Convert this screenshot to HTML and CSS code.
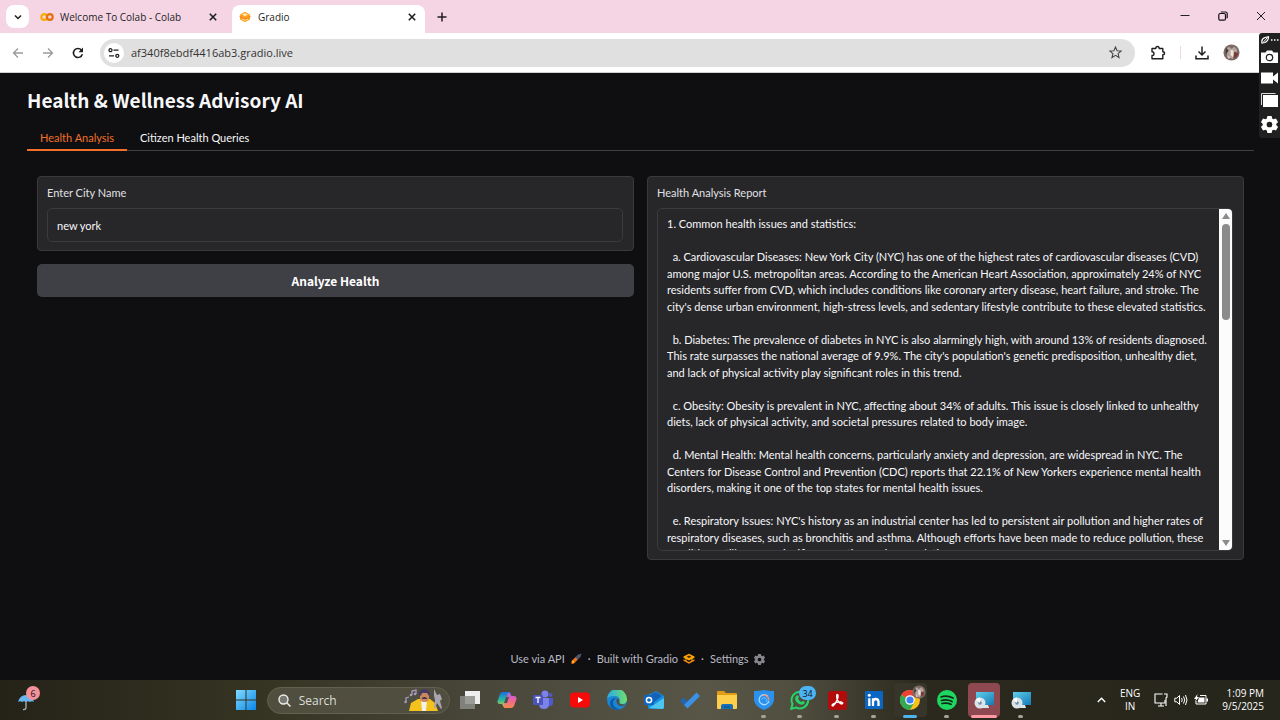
FILE: index.html
```
<!DOCTYPE html>
<html lang="en">
<head>
<meta charset="utf-8">
<meta name="viewport" content="width=device-width, initial-scale=1">
<title>Gradio</title>
<link rel="stylesheet" href="styles.css">
</head>
<body>
<svg class="defs" aria-hidden="true">
  <defs>
    <linearGradient id="blue" x1="0" y1="0" x2="1" y2="1"><stop offset="0" stop-color="#7fdcff"/><stop offset="1" stop-color="#0a86e8"/></linearGradient>
    <linearGradient id="screen" x1="0" y1="0" x2="1" y2="1"><stop offset="0" stop-color="#5fd0ea"/><stop offset="1" stop-color="#1579b8"/></linearGradient>
    <linearGradient id="edge" x1="0" y1="0" x2="1" y2="0"><stop offset="0" stop-color="#2aa9e8"/><stop offset="1" stop-color="#6fe06a"/></linearGradient>
    <linearGradient id="copA" x1="0" y1="0" x2="0" y2="1"><stop offset="0" stop-color="#1a6fe0"/><stop offset=".5" stop-color="#25b8a0"/><stop offset="1" stop-color="#f2c32e"/></linearGradient>
    <linearGradient id="copB" x1="0" y1="0" x2="0" y2="1"><stop offset="0" stop-color="#a960ee"/><stop offset=".5" stop-color="#f0649a"/><stop offset="1" stop-color="#f58a4b"/></linearGradient>
    <symbol id="gradio" viewBox="0 0 12 12">
      <path d="M6 .8 11 3.500v5L6 11.200 1 8.500v-5z" fill="#ffa51f"/>
      <path d="M3.200 3.600 6 2.200l2.800 1.400L6 5.200z" fill="#fff0c8"/>
      <path d="M.5 5.400 6 8.200l5.500-2.800" fill="none" stroke="#f97316" stroke-width="1"/>
      <path d="M3 7.800l3 1.500 3-1.500" fill="none" stroke="#ffe0a0" stroke-width="1"/>
    </symbol>
    <symbol id="gradio-dark" viewBox="0 0 12 12">
      <path d="M6 .8 11.500 3.600v1.200L6 7.600.5 4.800V3.600z" fill="#ffa500"/><path d="M3.500 3.700 6 2.400l2.500 1.300L6 5z" fill="#3b2a10"/>
      <path d="M.5 6.200 6 9l5.500-2.800v1.600L6 10.700.5 7.800z" fill="#f98a16"/><path d="M3 5v3M9 5v3" stroke="#ffa500"/>
    </symbol>
    <symbol id="gear" viewBox="0 0 16 16">
      <path fill="currentColor" fill-rule="evenodd" d="M6 0h4l.5 2.300 1.400.8 2.200-.8 2 3.400L14.400 7.200v1.600l1.700 1.500-2 3.400-2.200-.8-1.400.8L10 16H6l-.5-2.300-1.400-.8-2.200.8-2-3.400L1.600 8.800V7.200L-.1 5.700l2-3.400 2.200.8 1.400-.8zM8 5.300a2.700 2.700 0 1 0 0 5.400 2.700 2.700 0 0 0 0-5.400z"/>
    </symbol>
    <symbol id="close" viewBox="0 0 10 10"><path d="M1 1l8 8M9 1l-8 8" stroke="currentColor" fill="none"/></symbol>
    <symbol id="pcdisc" viewBox="0 0 22 20">
      <path d="M3 2h18v13H3z" fill="url(#screen)"/><path d="M10 15h5l1 3H9z" fill="#dfe6ea"/>
      <circle cx="7" cy="13" r="5.500" fill="#dbe3ea"/><circle cx="7" cy="13" r="1.800" fill="#6b8ea8"/><path d="M7 13 3 9.500A5.500 5.500 0 0 1 7 7.500z" fill="#fff"/>
    </symbol>
    <symbol id="cat" viewBox="0 0 18 18">
      <circle cx="9" cy="9" r="8.500" fill="#7c6a66"/><path d="M3 6l3-3 3 2 3-2 3 3-1 5-4 5-5-3z" fill="#b3a49c"/><path d="M8 6l3 1v7l-3-2z" fill="#ece4df"/><path d="M12 8l4 2-2 4-3 1z" fill="#7b3836"/><path d="M3 4l3 3-3 4z" fill="#41393a"/><path d="M4 12l4 2-2 2z" fill="#d9cdc6"/>
    </symbol>
  </defs>
</svg>

<header class="browser">
  <div class="tabstrip">
    <button class="tab-search" aria-label="Search tabs"><svg width="8" height="8" viewBox="0 0 8 8"><path d="M1 2.500 4 5.500 7 2.500" fill="none" stroke="#1f1f1f" stroke-width="1.500"/></svg></button>
    <div class="tab">
      <svg width="14" height="10" viewBox="0 0 14 10"><circle cx="4.200" cy="5" r="2.900" fill="none" stroke="#f9ab00" stroke-width="2.200"/><circle cx="9.800" cy="5" r="2.900" fill="none" stroke="#e8710a" stroke-width="2.200"/></svg>
      <span class="tab-title">Welcome To Colab - Colab</span>
      <button class="icon-btn" aria-label="Close Colab tab"><svg width="8" height="8" class="bold"><use href="#close"/></svg></button>
    </div>
    <div class="tab tab-active">
      <svg width="12" height="12"><use href="#gradio"/></svg>
      <span class="tab-title">Gradio</span>
      <button class="icon-btn" aria-label="Close Gradio tab"><svg width="8" height="8" class="bold"><use href="#close"/></svg></button>
    </div>
    <button class="icon-btn new-tab" aria-label="New tab"><svg width="10" height="10" viewBox="0 0 10 10"><path d="M5 .5v9M.5 5h9" stroke="#1f1f1f" stroke-width="1.500"/></svg></button>
    <div class="window-controls">
      <button class="icon-btn" aria-label="Minimize"><svg width="10" height="10" viewBox="0 0 10 10"><path d="M.5 4.500h9" stroke="#222"/></svg></button>
      <button class="icon-btn" aria-label="Restore"><svg width="10" height="10" viewBox="0 0 10 10"><rect x=".8" y="2.500" width="6.700" height="6.700" rx="1.500" fill="none" stroke="#111" stroke-width="1.200"/><path d="M2.800 1h4.700q1.700 0 1.700 1.700v4.500" fill="none" stroke="#111" stroke-width="1.200"/></svg></button>
      <button class="icon-btn" aria-label="Close window"><svg width="10" height="10"><use href="#close"/></svg></button>
    </div>
  </div>
  <div class="toolbar">
    <button class="icon-btn muted" aria-label="Back"><svg width="12" height="12" viewBox="0 0 12 12"><path d="M11 6H1.500M6 1.500 1.500 6 6 10.500" fill="none" stroke="currentColor" stroke-width="1.300"/></svg></button>
    <button class="icon-btn muted" aria-label="Forward"><svg width="12" height="12" viewBox="0 0 12 12"><path d="M1 6h9.500M6 1.500 10.500 6 6 10.500" fill="none" stroke="currentColor" stroke-width="1.300"/></svg></button>
    <button class="icon-btn" aria-label="Reload"><svg width="12" height="12" viewBox="0 0 12 12"><path d="M10.300 7.200A4.500 4.500 0 1 1 9.500 3.200" fill="none" stroke="#1f1f1f" stroke-width="1.600"/><path d="M11 .6v4.600H6.500z" fill="#1f1f1f"/></svg></button>
    <div class="omnibox">
      <button class="site-info" aria-label="Site information"><svg width="12" height="12" viewBox="0 0 12 12"><g fill="none" stroke="#1f1f1f" stroke-width="1.300"><circle cx="2.500" cy="3.200" r="1.500"/><path d="M5.500 3.200h5M1 8.800h5"/><circle cx="9.300" cy="8.800" r="1.500"/></g></svg></button>
      <input class="address" type="text" aria-label="Address" value="af340f8ebdf4416ab3.gradio.live">
      <button class="icon-btn" aria-label="Bookmark"><svg width="13" height="13" viewBox="0 0 13 13"><path d="M6.500 1l1.600 3.700 4 .3-3 2.600.9 3.900-3.500-2.100L3 11.500l.9-3.900-3-2.600 4-.3z" fill="none" stroke="#474747" stroke-width="1.100"/></svg></button>
    </div>
    <div class="toolbar-actions">
      <button class="icon-btn" aria-label="Extensions"><svg width="16" height="16" viewBox="0 0 16 16"><path d="M2 3.500h3.800q0-2 1.700-2t1.700 2H12.800V6.800q1.800 0 1.800 1.500t-1.800 1.500V13.800H2V10.500q2 0 2-1.800T2 6.800z" fill="none" stroke="#1f1f1f" stroke-width="1.400" stroke-linejoin="round"/></svg></button>
      <span class="divider"></span>
      <button class="icon-btn" aria-label="Downloads"><svg width="14" height="14" viewBox="0 0 14 14"><path d="M7 .5v8.500M3.500 5.500 7 9l3.500-3.500M1 9.500v3.300h12V9.500" fill="none" stroke="#1f1f1f" stroke-width="1.500"/></svg></button>
      <button class="icon-btn" aria-label="Profile"><svg width="17" height="17"><use href="#cat"/></svg></button>
    </div>
  </div>
</header>

<main class="app">
  <h1 class="app-title">Health &amp; Wellness Advisory AI</h1>
  <div class="app-tabs" role="tablist">
    <button class="app-tab app-tab-on" role="tab" aria-selected="true">Health Analysis</button>
    <button class="app-tab" role="tab" aria-selected="false">Citizen Health Queries</button>
  </div>
  <div class="columns">
    <section class="column">
      <div class="panel">
        <label class="field-label" for="city">Enter City Name</label>
        <input class="field" id="city" type="text" value="new york">
      </div>
      <button class="analyze">Analyze Health</button>
    </section>
    <section class="column">
      <div class="panel">
        <label class="field-label" for="report">Health Analysis Report</label>
        <div class="report-box">
          <textarea class="report" id="report" readonly>1. Common health issues and statistics:

  a. Cardiovascular Diseases: New York City (NYC) has one of the highest rates of cardiovascular diseases (CVD) among major U.S. metropolitan areas. According to the American Heart Association, approximately 24% of NYC residents suffer from CVD, which includes conditions like coronary artery disease, heart failure, and stroke. The city's dense urban environment, high-stress levels, and sedentary lifestyle contribute to these elevated statistics.

  b. Diabetes: The prevalence of diabetes in NYC is also alarmingly high, with around 13% of residents diagnosed. This rate surpasses the national average of 9.9%. The city's population's genetic predisposition, unhealthy diet, and lack of physical activity play significant roles in this trend.

  c. Obesity: Obesity is prevalent in NYC, affecting about 34% of adults. This issue is closely linked to unhealthy diets, lack of physical activity, and societal pressures related to body image.

  d. Mental Health: Mental health concerns, particularly anxiety and depression, are widespread in NYC. The Centers for Disease Control and Prevention (CDC) reports that 22.1% of New Yorkers experience mental health disorders, making it one of the top states for mental health issues.

  e. Respiratory Issues: NYC's history as an industrial center has led to persistent air pollution and higher rates of respiratory diseases, such as bronchitis and asthma. Although efforts have been made to reduce pollution, these conditions still affect a significant portion of the population.</textarea>
          <div class="scrollbar" aria-hidden="true">
            <svg width="8" height="6" viewBox="0 0 8 6"><path d="M4 0 8 6H0z" fill="#8b8b8b"/></svg>
            <div class="track"><div class="thumb"></div></div>
            <svg width="8" height="6" viewBox="0 0 8 6"><path d="M0 0h8L4 6z" fill="#8b8b8b"/></svg>
          </div>
        </div>
      </div>
    </section>
  </div>
  <footer class="app-footer">
    <button class="foot-link">Use via API <svg width="12" height="12" viewBox="0 0 12 12"><path d="M11.500.5 10.500 4 6.500 8 4 5.500 8 1.500z" fill="#4b5563"/><path d="M5.500 4.500 7.500 6.500 5.500 9 3 6.500z" fill="#f97316"/><path d="M3 6.500 5.500 9 4 10.500 1.500 11 1.500 8z" fill="#ff7c10"/><path d="M2.500 9.500 4 8" stroke="#ffd04a" stroke-width="1.200"/></svg></button>
    <span>·</span>
    <a class="foot-link" href="#gradio">Built with Gradio <svg width="12" height="12"><use href="#gradio-dark"/></svg></a>
    <span>·</span>
    <button class="foot-link">Settings <svg width="11" height="11" class="foot-gear"><use href="#gear"/></svg></button>
  </footer>
</main>

<aside class="capture">
  <svg width="18" height="8" viewBox="0 0 18 8"><path d="M1 7Q0 3 4 1.500L7.500.8Q7.500 5 4 6.500z" fill="none" stroke="#fff" stroke-width="1.200"/><path d="M2.500 6 6 2" stroke="#fff"/><path d="M10 4h1.500M13 4h1.500M16 4h1.500" stroke="#fff" stroke-width="1.300"/></svg>
  <button class="icon-btn" aria-label="Take screenshot"><svg width="17" height="13" viewBox="0 0 17 13"><path d="M0 2.500h4.500L6 .5h5l1.500 2H17V13H0z" fill="#fff"/><circle cx="8.500" cy="7.500" r="3.200" fill="none" stroke="#222" stroke-width="1.200"/></svg></button>
  <button class="icon-btn" aria-label="Record video"><svg width="17" height="12" viewBox="0 0 17 12"><path d="M0 .5h12v4l5-4v11l-5-4v4H0z" fill="#fff"/></svg></button>
  <button class="icon-btn" aria-label="Gallery"><svg width="17" height="14" viewBox="0 0 17 14"><path d="M.5 12V.5h14" fill="none" stroke="#ddd"/><path d="M2 2h15v12H2z" fill="#fff"/></svg></button>
  <button class="icon-btn" aria-label="Capture settings"><svg width="17" height="17" class="white"><use href="#gear"/></svg></button>
</aside>

<footer class="taskbar">
  <button class="task weather" aria-label="Weather"><svg width="26" height="26" viewBox="0 0 26 26"><path d="M3 15Q5 8 11 8t8 7q-2-1.500-4 0-2-1.500-4 0-2-1.500-4 0-2-1.500-4 0z" fill="#6ab6f0"/><path d="M11 14v7q-.5 2-3 1.500" fill="none" stroke="#aab3bb" stroke-width="1.300"/></svg><span class="badge badge-pink">6</span></button>
  <div class="task-center">
    <button class="task" aria-label="Start"><svg width="20" height="20" viewBox="0 0 20 20"><path d="M0 0h9.500v9.500H0zM10.500 0H20v9.500h-9.500zM0 10.500h9.500V20H0zM10.500 10.500H20V20h-9.500z" fill="url(#blue)"/></svg></button>
    <div class="search">
      <svg width="13" height="13" viewBox="0 0 13 13"><circle cx="5.500" cy="5.500" r="4.500" fill="#77786f" stroke="#eee" stroke-width="1.400"/><path d="M9 9l3.500 3.500" stroke="#eee" stroke-width="1.500"/></svg>
      <input class="search-input" type="text" placeholder="Search" aria-label="Search">
      <svg width="40" height="24" viewBox="0 0 40 24"><path d="M5 23l2-8 7-4h12l5 4 3 8z" fill="#f3c21d"/><path d="M17 12h6l-1 11h-4z" fill="#f4f1ea"/><rect x="16" y="3" width="9" height="11" rx="4" fill="#c98760"/><path d="M15 6q0-5 5-5t6 4l-1 3-2-3h-5l-1 3z" fill="#463b5e"/><path d="M18 10q2-2 5 0v1h-5z" fill="#473542"/><path d="M8 7V3l4-1v4M2 14v-4l3-1" fill="none" stroke="#a99bc0" stroke-width="1.300"/><circle cx="7" cy="7" r="1.300" fill="#a99bc0"/><circle cx="11" cy="6" r="1.300" fill="#a99bc0"/><circle cx="1.500" cy="14" r="1.200" fill="#a99bc0"/><path d="M30 1l3 6 3-1 2 5-2 2 2 7-1 1-4-6-2 6-1-1 1-8-1-4z" fill="#aaa3b0"/></svg>
    </div>
    <button class="task" aria-label="Task view"><svg width="20" height="18" viewBox="0 0 20 18"><path d="M5 0h15v13H5z" fill="#eee"/><path d="M0 5h15v13H0z" fill="#8c8c88" opacity=".85"/></svg></button>
    <button class="task" aria-label="Copilot"><svg width="20" height="18" viewBox="0 0 20 18"><path d="M6 1h6q2 0 1.500 2L10 15q-1 2-3 1.500L5 13H3Q0 13 .5 10L3 3q1-2 3-2z" fill="url(#copA)"/><path d="M14 17H8q-1.500 0-1-2L10.500 3Q11 1 13 2l1.500 3H17q3 0 2.500 3L17 15q-1 2-3 2z" fill="url(#copB)"/><path d="M9 6h3l-2 6H7z" fill="#50504a"/></svg></button>
    <button class="task" aria-label="Teams"><svg width="20" height="20" viewBox="0 0 20 20"><circle cx="12" cy="4" r="3.500" fill="#7b83eb"/><circle cx="17.500" cy="5" r="2" fill="#5059c9"/><path d="M14 8h6v6q-1 3-5 2z" fill="#5059c9"/><path d="M6 8h10v6q0 5-5 5t-5-5z" fill="#7b83eb"/><rect x="0" y="5" width="10" height="10" rx="1" fill="#4b53bc"/><path d="M2.500 7.500h5M5 7.500V13" stroke="#fff" stroke-width="1.300"/></svg></button>
    <button class="task" aria-label="YouTube"><svg width="20" height="16" viewBox="0 0 20 16"><rect width="20" height="15" y=".5" rx="4" fill="#f60b0b"/><path d="M8 5l5 3-5 3z" fill="#fff"/></svg></button>
    <button class="task" aria-label="Edge"><svg width="20" height="20" viewBox="0 0 20 20"><circle cx="10" cy="10" r="10" fill="#1b86d4"/><path d="M0 9A10 10 0 0 1 20 9q0 5-5 5-4 0-2.500-3Q13 6 7.500 6 2 6 0 9z" fill="url(#edge)"/><path d="M9 8q-5 3-2 8 2 3 6 3.500Q3 21 3 13q1-5 6-5z" fill="#0c59a4"/><path d="M9.500 9q3-1 3 2-1 3 3 3.500 2 0 3.500-1-3 3.500-6 2.500-4.500-2-3.500-7z" fill="#50504a"/></svg></button>
    <button class="task" aria-label="Outlook"><svg width="20" height="18" viewBox="0 0 20 18"><path d="M4 4l8-4 8 5v11q0 2-2 2H6q-2 0-2-2z" fill="#1490df"/><path d="M7 3l5-2 6 4-8 6z" fill="#1760b8"/><path d="M5 17 20 7v9q0 2-2 2z" fill="#4cc6f0"/><rect x="0" y="4" width="10" height="10" rx="1" fill="#0f66c0"/><circle cx="5" cy="9" r="2.600" fill="none" stroke="#fff" stroke-width="1.500"/></svg></button>
    <button class="task" aria-label="To Do"><svg width="20" height="18" viewBox="0 0 20 18"><path d="M3.500 6.500 9 12l-3.500 3.500L0 10z" fill="#2564b0"/><path d="M16.500 1.500 20 5 7.500 17.500 4 14z" fill="#3b91e6"/></svg></button>
    <button class="task" aria-label="File Explorer"><svg width="20" height="18" viewBox="0 0 20 18"><path d="M0 1q0-1 1-1h6l2 2h10q1 0 1 1v5H0z" fill="#e09b17"/><path d="M0 4h20v13q0 1-1 1H1q-1 0-1-1z" fill="#fdcf4b"/><path d="M4 18v-3q0-2 2-2h8q2 0 2 2v3z" fill="#1670b8"/><path d="M7 16h6" stroke="#0c4c86"/></svg></button>
    <button class="task running" aria-label="VPN shield"><svg width="20" height="20" viewBox="0 0 20 20"><path d="M0 1q6 0 10-1 4 1 10 1v9q-1 7-10 10Q1 17 0 10z" fill="#2b91ee"/><path d="M14 6.500A5 5 0 1 0 15 11" fill="none" stroke="#a7d9ff" stroke-width="1.300"/><path d="M7.500 9.500q1.500-3 4-1.500t1 4" fill="none" stroke="#7cc0fa"/><path d="M9 5.200q5-.5 6 5" fill="none" stroke="#ff906a" stroke-width="1.200"/></svg></button>
    <button class="task running" aria-label="WhatsApp"><svg width="20" height="20" viewBox="0 0 20 20"><path d="M1.200 18.800 2.500 14A8.300 8.300 0 1 1 6 17.500z" fill="none" stroke="#25d366" stroke-width="2"/><path d="M6 6q2-2 3 1l-1 1.500q1 2.500 3.500 3.500L13 11q3 1 1 3-4 2-7.500-2Q4 9 6 6z" fill="#25d366"/></svg><span class="badge badge-blue">34</span></button>
    <button class="task running" aria-label="Acrobat"><svg width="19" height="19" viewBox="0 0 19 19"><rect width="19" height="19" rx="3" fill="#b30b0b"/><path d="M9 3.500q2 0 .5 4.500-2 5-4.500 7-2 0 0-2 4-2.500 8.500-2 2.500 1 .5 2-3-.5-4.500-4Q8 5 9 3.500z" fill="none" stroke="#fff" stroke-width="1.300"/></svg></button>
    <button class="task running" aria-label="LinkedIn"><svg width="18" height="18" viewBox="0 0 18 18"><rect width="18" height="18" rx="1" fill="#0a66c2"/><path d="M4.300 7.200V15M8 15V7.200M8 11q.3-3 2.700-3t2.800 2.500V15" fill="none" stroke="#fff" stroke-width="2.300"/><circle cx="4.300" cy="4.300" r="1.500" fill="#fff"/></svg></button>
    <button class="task running focused" aria-label="Chrome"><svg width="20" height="20" viewBox="0 0 20 20"><circle cx="10" cy="10" r="10" fill="#fbc116"/><path d="M10 10 1.300 5A10 10 0 0 1 18.700 5z" fill="#ea4335"/><path d="M10 10 1.300 5A10 10 0 0 0 10 20l4.500-8z" fill="#34a853"/><circle cx="10" cy="10" r="4.800" fill="#fff"/><circle cx="10" cy="10" r="3.600" fill="#3b82f0"/></svg><svg class="task-avatar" width="14" height="14"><use href="#cat"/></svg></button>
    <button class="task running" aria-label="Spotify"><svg width="20" height="20" viewBox="0 0 20 20"><circle cx="10" cy="10" r="10" fill="#1ed760"/><path d="M4 7q6-2 12 1M4.500 10.500q5.500-1.500 10.500 1M5 13.500q5-1 9 .8" fill="none" stroke="#15251a" stroke-width="1.700" stroke-linecap="round"/></svg></button>
    <button class="task running alert" aria-label="Installer"><svg width="22" height="20"><use href="#pcdisc"/></svg></button>
    <button class="task running" aria-label="Disc tool"><svg width="22" height="20"><use href="#pcdisc"/></svg></button>
  </div>
  <div class="tray">
    <button class="icon-btn" aria-label="Hidden icons"><svg width="9" height="6" viewBox="0 0 9 6"><path d="M.8 5 4.500 1.300 8.200 5" fill="none" stroke="#fff" stroke-width="1.400"/></svg></button>
    <div class="tray-text"><span>ENG</span><span>IN</span></div>
    <div class="tray-icons">
      <svg width="14" height="14" viewBox="0 0 14 14"><path d="M8.500 1H1v9h10V7M4 13h6M7 10v3" fill="none" stroke="#fff" stroke-width="1.100"/><path d="M10 1h3v3l-1 1v8" fill="none" stroke="#fff" stroke-width="1.100"/></svg>
      <svg width="14" height="12" viewBox="0 0 14 12"><path d="M.8 4.200h2L5.500 1.500v9L2.800 7.800h-2zM7.500 4q1.500 2 0 4M9.500 2.500q2.500 3.500 0 7M11.500 1q3 5 0 10" fill="none" stroke="#fff"/></svg>
      <svg width="14" height="12" viewBox="0 0 14 12"><path d="M6 1.500h6v8.500H2V7" fill="none" stroke="#fff"/><path d="M5 3.500h5.500V8.500H3.500zM12.500 4.500H14v3h-1.500zM3.500 0 0 5h2l-1 3 4-5H3z" fill="#fff"/></svg>
    </div>
    <div class="tray-text tray-clock"><span>1:09 PM</span><span>9/5/2025</span></div>
  </div>
</footer>
</body>
</html>
```
FILE: styles.css
```
* { box-sizing: border-box; }

body {
  margin: 0;
  min-height: 100vh;
  display: flex;
  flex-direction: column;
  position: relative;
  background: #0f0f11;
  font-family: "Open Sans", "Noto Sans", sans-serif;
  font-size: 11px;
}

button, input, textarea { font: inherit; color: inherit; margin: 0; padding: 0; border: 0; background: none; }
svg { display: block; flex: none; }
.defs { position: absolute; width: 0; height: 0; }
.icon-btn { display: flex; align-items: center; justify-content: center; flex: none; }
.muted { color: #9a9a9a; }
.bold { stroke-width: 2px; }
.white { color: #fff; }

/* Browser frame */
.tabstrip { display: flex; align-items: flex-end; height: 33px; padding: 0 14px 0 6px; background: #f5d4e4; color: #1f1f1f; }
.tab-search { width: 23px; height: 23px; margin-bottom: 5px; border-radius: 8px; background: #fff; display: flex; align-items: center; justify-content: center; }
.tab { display: flex; align-items: center; gap: 6px; height: 28px; width: 203px; padding: 0 15px 4px 11px; }
.tab-title { flex: 1; font-size: 10px; white-space: nowrap; }
.tab-active { width: 193px; padding: 0 9px 4px 7px; gap: 7px; border-radius: 8px 8px 0 0; background: #fff; }
.new-tab { width: 34px; height: 28px; padding-bottom: 4px; }
.window-controls { display: flex; gap: 28px; margin-left: auto; padding-bottom: 12px; }
.toolbar { display: flex; align-items: center; height: 40px; padding-left: 12px; background: #fff; border-bottom: 1px solid #d0d0d0; color: #1f1f1f; gap: 18px; }
.omnibox { flex: 1; display: flex; align-items: center; gap: 7px; height: 28px; margin-left: -2px; padding: 0 13px 0 4px; border-radius: 14px; background: #e0e0e0; }
.site-info { width: 20px; height: 20px; border-radius: 50%; background: #fff; display: flex; align-items: center; justify-content: center; }
.address { flex: 1; min-width: 0; font-size: 11px; color: #333; }
.toolbar-actions { display: flex; align-items: center; gap: 14px; padding-right: 40px; margin-left: -3px; }
.divider { width: 1px; height: 13px; background: #f5d4e4; }

/* Capture strip floating over the window edge */
.capture { position: absolute; top: 33px; right: 0; width: 21px; padding: 3px 0 5px; border-radius: 3px 0 0 3px; background: #202020; display: flex; flex-direction: column; align-items: center; gap: 9px; }
.capture > :nth-child(2) { margin-top: -3px; }

/* Application */
.app { flex: 1; display: flex; flex-direction: column; padding: 14px 26px 13px 27px; color: #f8f8fa; font-family: Lato, "Noto Sans", sans-serif; font-size: 11px; }
.app-title { margin: 0; font-family: "Noto Sans CJK SC", sans-serif; font-size: 19px; line-height: 26px; font-weight: 700; }
.app-tabs { display: flex; margin-top: 12px; border-bottom: 1px solid #3f3f46; }
.app-tab { height: 26px; padding: 0 13px; margin-bottom: -1px; border-bottom: 2px solid transparent; }
.app-tab-on { color: #f2702a; border-color: #f2702a; }
.columns { display: flex; gap: 13px; padding: 25px 10px 0; align-items: flex-start; }
.column { flex: 1; min-width: 0; display: flex; flex-direction: column; gap: 13px; }
.panel { display: flex; flex-direction: column; gap: 7px; padding: 8px 10px 8px 9px; border: 1px solid #3a3a3e; border-radius: 4px; background: #27272a; }
.field-label { line-height: 16px; color: #e0e0e3; }
.field { height: 34px; padding: 0 9px; border: 1px solid #3a3a3f; border-radius: 5px; }
.analyze { height: 33px; border-radius: 5px; background: #3f3f46; font-family: "Noto Sans CJK SC", sans-serif; font-size: 12px; font-weight: 700; color: #fff; }
.report-box { display: flex; height: 343px; border: 1px solid #3a3a3f; border-radius: 5px; overflow: hidden; }
.report { flex: 1; min-width: 0; padding: 7px 8px 0 9px; line-height: 1.5; resize: none; outline: 0; overflow: auto; scrollbar-width: none; white-space: pre-wrap; }
.scrollbar { width: 13px; padding: 4px 0; display: flex; flex-direction: column; align-items: center; gap: 5px; background: #fcfcfc; }
.track { flex: 1; width: 8px; }
.thumb { height: 31%; border-radius: 4px; background: #8b8b8b; }
.app-footer { display: flex; justify-content: center; align-items: center; gap: 6px; margin-top: auto; padding-right: 6px; line-height: 16px; color: #b9b9c4; }
.foot-link { display: flex; align-items: center; gap: 5px; color: inherit; text-decoration: none; }
.foot-gear { color: #85858a; }

/* Taskbar */
.taskbar { display: flex; align-items: center; height: 40px; padding: 0 16px; background: linear-gradient(90deg, #252318 0%, #353322 20%, #48473a 38%, #585646 55%, #504e3f 62%, #2b291d 72%, #27261c 100%); color: #fff; }
.task { position: relative; display: flex; align-items: center; justify-content: center; width: 33px; height: 34px; border-radius: 4px; flex: none; }
.weather { width: 24px; }
.task-center { display: flex; align-items: center; gap: 4px; flex: 0 1 807px; min-width: 0; margin-left: 190px; }
.task-center .task { flex: 1 1 0; min-width: 0; }
.search { display: flex; align-items: center; gap: 8px; flex: none; width: 183px; height: 27px; padding: 0 5px 0 10px; border: 1px solid #62604f; border-radius: 14px; background: #4f4e3f; }
.search-input { flex: 1; min-width: 0; font-size: 12px; }
.search-input::placeholder { color: #deded8; opacity: 1; }
.running::after { content: ""; position: absolute; bottom: -1px; left: 50%; width: 5px; height: 3px; margin-left: -3px; border-radius: 2px; background: #a5a39a; }
.focused { background: #37352a; }
.focused::after { width: 14px; margin-left: -7px; background: #4cb4f0; }
.alert { background: #8d4850; }
.alert::after { width: 26px; margin-left: -13px; background: #ff9aa4; }
.badge { position: absolute; top: 3px; display: flex; align-items: center; justify-content: center; height: 14px; min-width: 14px; border-radius: 7px; font-size: 9px; color: #111; }
.badge-pink { right: 0; background: #f5919b; }
.badge-blue { left: 15px; width: 17px; background: #4cb4f5; }
.task-avatar { position: absolute; top: 2px; right: 1px; }
.tray { display: flex; align-items: center; margin-left: auto; gap: 14px; }
.tray-text { display: flex; flex-direction: column; align-items: center; font-size: 10px; line-height: 13px; }
.tray-icons { display: flex; align-items: center; gap: 6px; }
.tray-clock { align-items: flex-end; }
```
